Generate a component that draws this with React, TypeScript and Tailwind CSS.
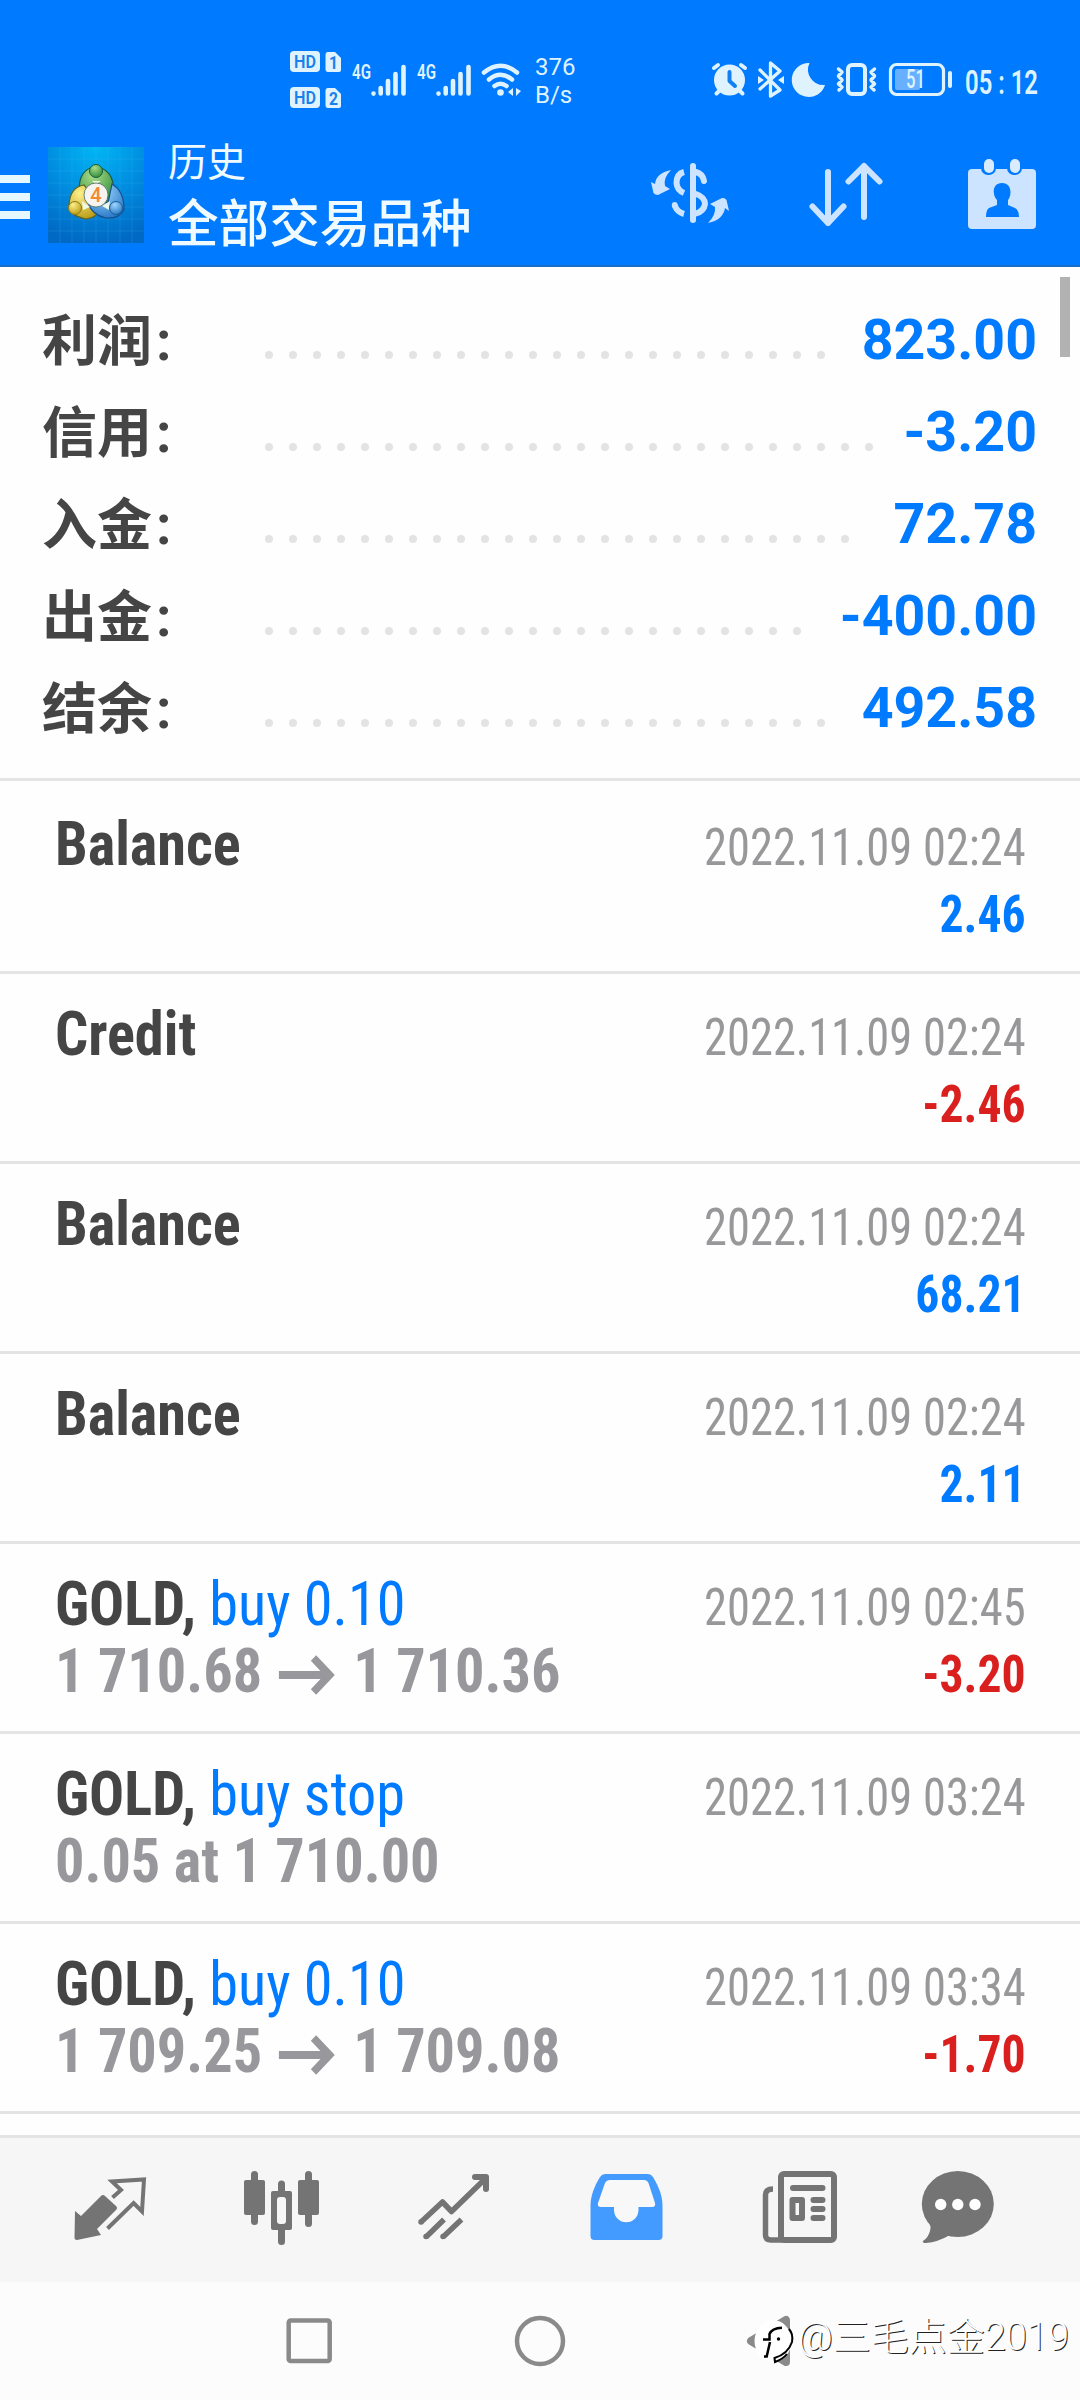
import React from "react";

const totals = [
    { label: "利润", value: "823.00", dots: 24 },
    { label: "信用", value: "-3.20", dots: 26 },
    { label: "入金", value: "72.78", dots: 25 },
    { label: "出金", value: "-400.00", dots: 23 },
    { label: "结余", value: "492.58", dots: 24 },
];

type Deal = {
    title: string;
    action?: string;
    open?: string;
    close?: string;
    time: string;
    amount?: string;
};

const deals: Deal[] = [
    { title: "Balance", time: "2022.11.09 02:24", amount: "2.46" },
    { title: "Credit", time: "2022.11.09 02:24", amount: "-2.46" },
    { title: "Balance", time: "2022.11.09 02:24", amount: "68.21" },
    { title: "Balance", time: "2022.11.09 02:24", amount: "2.11" },
    { title: "GOLD,", action: "buy 0.10", open: "1 710.68", close: "1 710.36", time: "2022.11.09 02:45", amount: "-3.20" },
    { title: "GOLD,", action: "buy stop", open: "0.05 at 1 710.00", time: "2022.11.09 03:24" },
    { title: "GOLD,", action: "buy 0.10", open: "1 709.25", close: "1 709.08", time: "2022.11.09 03:34", amount: "-1.70" },
];

function HdBadge({ sim }: { sim: string }) {
    return (
        <svg className="w-[52px] h-[22px] overflow-visible" viewBox="0 0 52 22">
            <rect x="0" y="0" width="30" height="21" rx="4" fill="#dff3ff" />
            <text x="4" y="17" fontSize="19" fontWeight="600" textLength="22" lengthAdjust="spacingAndGlyphs" fill="#1a80ea">HD</text>
            <path d="M38 1H45L51 7V19Q51 21 48 21H38Q35.500 21 35.500 18V4Q35.500 1 38 1Z" fill="#dff3ff" />
            <text x="39" y="17.500" fontSize="18" fontWeight="700" textLength="9" lengthAdjust="spacingAndGlyphs" fill="#1a80ea">{sim}</text>
        </svg>
    );
}

function Signal() {
    return (
        <svg className="w-[55px] h-[36px] overflow-visible" viewBox="0 0 55 36">
            <text x="0" y="16.500" fontSize="20" fontWeight="600" textLength="19" lengthAdjust="spacingAndGlyphs" fill="#dff3ff">4G</text>
            <g stroke="#dff3ff" strokeWidth="4.600" strokeLinecap="round">
                <path d="M21.500 31.500V31.600M28.700 26V31.500M36 19V31.500M43.500 12V31.500M51.500 5V31.500" />
            </g>
        </svg>
    );
}

function StatusBar() {
    return (
        <div className="h-[140px] flex items-start text-[#dff3ff]">
            <div className="ml-[290px] mt-[51px] flex flex-col gap-[14px]">
                <HdBadge sim="1" />
                <HdBadge sim="2" />
            </div>
            <div className="ml-[10px] mt-[62px] flex gap-[10px]">
                <Signal />
                <Signal />
            </div>
            <svg className="ml-[8px] mt-[60px] w-[44px] h-[40px]" viewBox="0 0 44 40" fill="none" stroke="#dff3ff" strokeWidth="4.500" strokeLinecap="round">
                <path d="M4 12.500Q20.500 -1 37 12.500M9 19.500Q20.500 10 32 19.500M14.500 26Q20.500 21.500 26.500 26" />
                <circle cx="20.500" cy="32.500" r="3.300" fill="#dff3ff" stroke="none" />
                <path d="M33 28L28 32L33 36ZM36 28L41 31L36 36Z" fill="#dff3ff" stroke="none" />
            </svg>
            <div className="ml-[11px] mt-[53px] w-[60px] text-[24px] leading-[28px]">
                <div>376</div>
                <div>B/s</div>
            </div>
            <div className="ml-[115px] mt-[60px] flex items-start">
                <svg className="w-[242px] h-[40px] overflow-visible" viewBox="710 60 242 40" fill="none" stroke="#dff3ff" strokeLinecap="round" strokeLinejoin="round">
                    <circle cx="729.500" cy="80" r="15.500" fill="#dff3ff" stroke="none" />
                    <path d="M714 68L718 65M745 68L741 65M719 91L716.500 93.500M740 91L742.500 93.500" strokeWidth="4" />
                    <path d="M729.500 72V81L735 86" stroke="#1380f2" strokeWidth="4" />
                    <path d="M760 70L780 90L770.500 96V63L780 71L760 89" strokeWidth="3.300" />
                    <path d="M758 76L764 80L758 84ZM784 76L778 80L784 84Z" fill="#dff3ff" stroke="none" />
                    <path d="M809.500 63A17 17 0 1 0 825 85A15.500 15.500 0 0 1 809.500 63Z" fill="#dff3ff" stroke="none" />
                    <rect x="848" y="65" width="17" height="29" rx="4" strokeWidth="4" />
                    <path d="M838.500 69L842 72L838.500 76L842 80L838.500 84L842 87L839 90M874.500 69L871 72L874.500 76L871 80L874.500 84L871 87L874 90" strokeWidth="3.500" />
                    <rect x="890.500" y="64.500" width="53" height="30" rx="6" strokeWidth="3.200" />
                    <rect x="895" y="69" width="25" height="21" rx="2" fill="#66b0ff" stroke="none" />
                    <text x="906" y="88" fontSize="25" fontWeight="500" textLength="19" lengthAdjust="spacingAndGlyphs" fill="#dff3ff" stroke="none">51</text>
                    <path d="M950 73V86" strokeWidth="4" />
                </svg>
                <svg className="ml-[12px] w-[76px] h-[40px] overflow-visible" viewBox="964 60 76 40" fill="#dff3ff" fontSize="33" fontWeight="600">
                    <text x="965" y="94" textLength="73" lengthAdjust="spacingAndGlyphs">05 : 12</text>
                </svg>
            </div>
        </div>
    );
}

function Logo() {
    return (
        <svg className="w-24 h-24" viewBox="0 0 96 96">
            <defs>
                <radialGradient id="sky" cx="50%" cy="0%" r="100%">
                    <stop offset="0" stopColor="#00b7f5" />
                    <stop offset="0.500" stopColor="#008ee0" />
                    <stop offset="1" stopColor="#0069c4" />
                </radialGradient>
                <radialGradient id="green" cx="40%" cy="25%" r="80%">
                    <stop offset="0" stopColor="#a9dc8a" />
                    <stop offset="1" stopColor="#2e8b3a" />
                </radialGradient>
                <radialGradient id="yellow" cx="35%" cy="25%" r="85%">
                    <stop offset="0" stopColor="#fff08a" />
                    <stop offset="1" stopColor="#b5950f" />
                </radialGradient>
                <radialGradient id="blue" cx="40%" cy="25%" r="85%">
                    <stop offset="0" stopColor="#9ed7ff" />
                    <stop offset="1" stopColor="#1c6fc0" />
                </radialGradient>
            </defs>
            <rect width="96" height="96" fill="url(#sky)" />
            <path d="M12 0V96M24 0V96M36 0V96M48 0V96M60 0V96M72 0V96M84 0V96M0 12H96M0 24H96M0 36H96M0 48H96M0 60H96M0 72H96M0 84H96" stroke="#4cc3f5" strokeOpacity="0.180" />
            <path d="M31 44Q31 21 48 20Q66 22 66 46L62 56L36 50Z" fill="url(#green)" stroke="#1c5a3c" strokeWidth="1.200" />
            <path d="M36 38Q22 40 21 58Q20 68 38 72Q50 71 52 60Z" fill="url(#yellow)" stroke="#5e6420" strokeWidth="1.200" />
            <path d="M64 37Q76 44 76 62Q72 72 58 71Q44 68 40 56L60 56Z" fill="url(#blue)" stroke="#174f8c" strokeWidth="1.200" />
            <path d="M34 54L35 63L42 60M54 59L61 63L62 54M44 34L48 37L53 34" fill="#eef8e8" />
            <circle cx="48" cy="24" r="6.500" fill="url(#green)" stroke="#1c5a3c" />
            <circle cx="27" cy="61" r="6.500" fill="url(#yellow)" stroke="#8a7a14" />
            <circle cx="68" cy="61" r="6.500" fill="url(#blue)" stroke="#1c5c9c" />
            <circle cx="48" cy="48" r="12" fill="#f6f3f1" stroke="#4a6a5a" strokeWidth="0.800" />
            <text x="48" y="55" fontSize="20" fontWeight="500" textAnchor="middle" fill="#f28a30">4</text>
        </svg>
    );
}

function Header() {
    return (
        <header className="h-[267px] bg-[#007aff] border-b-2 border-[#1a6fc4]">
            <StatusBar />
            <div className="flex items-start">
                <div className="mt-[35px] w-[30px] flex flex-col gap-[10px]">
                    <div className="h-2 bg-[#e6f8ff]"></div>
                    <div className="h-2 bg-[#e6f8ff]"></div>
                    <div className="h-2 bg-[#e6f8ff]"></div>
                </div>
                <div className="ml-[18px] mt-[7px]">
                    <Logo />
                </div>
                <div className="ml-6 w-[480px] text-[#f0fbff]">
                    <div className="text-[39px] leading-[46px]">历史</div>
                    <div className="text-[50.6px] leading-[60px] mt-[9px] font-medium">全部交易品种</div>
                </div>
                <svg className="w-[432px] h-[100px]" viewBox="648 140 432 100" fill="none" stroke="#cce4ff" strokeLinecap="round" strokeLinejoin="round">
                    <path d="M693 166V220" strokeWidth="6" />
                    <path d="M684 172Q676.500 174 676.500 183Q677 190 684 193" strokeWidth="6" strokeLinecap="butt" />
                    <path d="M674.500 205Q677 212 684 214" strokeWidth="6" strokeLinecap="butt" />
                    <circle cx="674.700" cy="205" r="2.900" fill="#cce4ff" stroke="none" />
                    <path d="M696 172Q703 174 704 181M696 194Q705 197 705 204Q704 211 696 213.500" strokeWidth="6" />
                    <path d="M671 170Q656 173 655 184L651 182L653.500 193Q655 195 658 195L670 189L665 186Q663 178 671 170Z" fill="#cce4ff" stroke="none" />
                    <path d="M708 223Q723 220 725 208L729 211L726.500 200Q725 197.500 722 198L710 204L715 207Q716 215 708 223Z" fill="#cce4ff" stroke="none" />
                    <path d="M828 172V223M812.500 206.500L828 223L843.500 206.500M864 217V166M848.500 181.500L864 166L879.500 181.500" strokeWidth="6" />
                    <rect x="968" y="169" width="68" height="60" rx="4" fill="#cce4ff" stroke="none" />
                    <rect x="981" y="156" width="15" height="19" rx="7" fill="#007aff" stroke="none" />
                    <rect x="1007" y="156" width="15" height="19" rx="7" fill="#007aff" stroke="none" />
                    <rect x="984" y="159" width="10" height="14" rx="5" fill="#d9ecff" stroke="none" />
                    <rect x="1010" y="159" width="10" height="14" rx="5" fill="#d9ecff" stroke="none" />
                    <path d="M1002 183C1012 183 1012 195 1008 200V205L1015 208Q1019 210 1019 217H986Q986 210 989 208L997 205V200C992 195 992 183 1002 183Z" fill="#007aff" stroke="none" />
                </svg>
            </div>
        </header>
    );
}

function Totals() {
    return (
        <div className="h-[514px] pt-[27px] pl-[42px] pr-[43px] border-b-[3px] border-[#e4e4e4]">
            {totals.map((row) => (
                <div key={row.label} className="h-[92px] flex items-center font-bold text-[55.5px]">
                    <div className="w-[223px] pt-[3px] text-[55px] text-[#454545]">
                        {row.label}
                        <span className="ml-[4px]">:</span>
                    </div>
                    <div className="flex gap-4 pt-[30px]">
                        {Array.from({ length: row.dots }, (_, i) => (
                            <div key={i} className="w-2 h-2 rounded-full bg-[#e3e3e3]"></div>
                        ))}
                    </div>
                    <div className="ml-auto pt-[2px] text-[#007aff]">{row.value}</div>
                </div>
            ))}
        </div>
    );
}

function DealRow({ deal }: { deal: Deal }) {
    const loss = deal.amount?.startsWith("-");
    return (
        <div className="h-[190px] border-b-[3px] border-[#e4e4e4] pl-[55px] pr-[54px] pt-[26px] flex justify-between [font-stretch:75%]">
            <div className="origin-left scale-x-[0.94] text-[62px] leading-[67px] font-bold text-[#454545] whitespace-nowrap">
                <div>
                    {deal.title}
                    {deal.action && <span className="font-[450] text-[#007aff]"> {deal.action}</span>}
                </div>
                {deal.open && (
                    <div className="flex items-center text-[#98989c]">
                        {deal.open}
                        {deal.close && (
                            <>
                                <svg className="w-[61px] h-[40px] ml-[18px] mr-[18px] mt-[8px]" viewBox="0 0 61 40" fill="none" stroke="#98989c" strokeWidth="8">
                                    <path d="M0 20H55M37 3L54 20L37 37" />
                                </svg>
                                {deal.close}
                            </>
                        )}
                    </div>
                )}
            </div>
            <div className="text-right text-[51px] leading-[67px] pt-[4px] whitespace-nowrap">
                <div className="origin-right scale-x-[0.912] font-[440] text-[#98989a]">{deal.time}</div>
                {deal.amount && (
                    <div className={loss ? "origin-right scale-x-[0.935] font-bold text-[#da1f1f]" : "origin-right scale-x-[0.935] font-bold text-[#007aff]"}>
                        {deal.amount}
                    </div>
                )}
            </div>
        </div>
    );
}

function TabBar() {
    return (
        <div className="h-[147px] pl-[23px] bg-[#f6f6f6] border-t-[3px] border-[#e4e4e4] flex">
            <svg className="w-[172px] h-[144px]" viewBox="23 2138 172 144">
                <path d="M75 2211L81 2216L101 2196Q103 2194 105 2196L116 2206Q118 2208 116 2210L97 2229L101 2235L77 2240Q74.500 2240 74.500 2238Z" fill="#747474" />
                <path d="M112.500 2197.500L121 2190L112 2181.500L144 2179.500L142 2211.500L133.600 2203L107.500 2228.500" fill="none" stroke="#747474" strokeWidth="4" />
            </svg>
            <svg className="w-[172px] h-[144px]" viewBox="195 2138 172 144" fill="#747474">
                <rect x="244" y="2180" width="21" height="35" rx="2" />
                <rect x="251" y="2171" width="7" height="54" rx="3.500" />
                <rect x="278" y="2180.500" width="7" height="64.500" rx="3.500" />
                <rect x="271" y="2191" width="21" height="39" rx="2" />
                <rect x="277" y="2197" width="9" height="27" rx="3" fill="#f6f6f6" />
                <rect x="298" y="2180" width="21" height="35" rx="2" />
                <rect x="305" y="2171" width="7" height="56" rx="3.500" />
            </svg>
            <svg className="w-[172px] h-[144px]" viewBox="367 2138 172 144" fill="none" stroke="#747474" strokeWidth="5.500">
                <path d="M420.500 2222.500L442.500 2202L451.500 2211.500L485 2179" strokeLinejoin="round" />
                <path d="M475 2177H486V2189" strokeWidth="6" strokeLinecap="round" strokeLinejoin="round" />
                <path d="M426 2237L444 2219.500M443 2237L461.500 2219.500" />
                <path d="M421 2222V2222.100M426 2236.500V2236.600M443 2236.500V2236.600" strokeLinecap="round" />
            </svg>
            <svg className="w-[172px] h-[144px]" viewBox="539 2138 172 144">
                <path d="M605 2174H648Q651 2174 653 2177C659 2187 662.500 2196 662.500 2206V2236Q662.500 2240 658.500 2240H594.500Q590.500 2240 590.500 2236V2206C590.500 2196 594 2187 600 2177Q602 2174 605 2174Z" fill="#439aff" />
                <path d="M610 2180H644Q647 2180 648.500 2183L655 2203Q656 2207 652 2207H638.500V2210A12.200 12.200 0 0 1 614 2210V2207H601Q597 2207 598 2203L605 2183Q606.500 2180 610 2180Z" fill="#f8f8f8" />
            </svg>
            <svg className="w-[172px] h-[144px]" viewBox="711 2138 172 144" fill="none" stroke="#747474" strokeWidth="6">
                <rect x="781" y="2174" width="53" height="66" rx="3" />
                <path d="M773 2189Q765.500 2189 765.500 2195V2235Q765.500 2240 771 2240H783" strokeWidth="5.500" />
                <path d="M793 2188H822.500M813.500 2200H822.500M813.500 2209H822.500M813.500 2218H822.500" strokeLinecap="round" />
                <rect x="792.500" y="2200" width="9.500" height="18" strokeLinejoin="round" />
            </svg>
            <svg className="w-[172px] h-[144px]" viewBox="883 2138 172 144">
                <ellipse cx="957.800" cy="2204" rx="36" ry="33" fill="#747474" />
                <path d="M927 2220Q932 2226 930 2231Q928 2238 923 2241Q922 2243 926 2243Q938 2242 950 2235L940 2215Z" fill="#747474" />
                <g fill="#ffffff">
                    <circle cx="940.700" cy="2204.500" r="5.700" />
                    <circle cx="957.800" cy="2204.500" r="5.700" />
                    <circle cx="975" cy="2204.500" r="5.700" />
                </g>
            </svg>
        </div>
    );
}

function SystemNav() {
    return (
        <div className="h-[118px] bg-[#fcfcfc] flex items-start">
            <svg className="w-[798px] h-[118px]" viewBox="0 2282 798 118" fill="none" stroke="#8a8a8a" strokeWidth="4.500">
                <rect x="288.700" y="2320.500" width="41" height="40.500" rx="2" />
                <circle cx="540" cy="2341" r="23" />
                <path d="M751 2341L786 2320V2362Z" fill="#8a8a8a" strokeWidth="8" strokeLinejoin="round" />
                <ellipse cx="773" cy="2341" rx="18.500" ry="21" fill="#ffffff" stroke="none" />
                <path d="M763 2339.500H769.500V2334Q772 2328 782 2327.700M770 2342L766.700 2356.500H764" stroke="#000000" strokeWidth="2.500" />
                <path d="M789 2329Q793.500 2334 792 2342Q788 2354 774.500 2358L775 2362Q783 2359 787 2354" stroke="#000000" strokeWidth="2" />
                <circle cx="778.500" cy="2339" r="1.700" fill="#000000" stroke="none" />
            </svg>
            <div className="mt-[34px] text-[38px] leading-[42px] font-light text-white whitespace-nowrap [text-shadow:1px_1px_0_#222]">@三毛点金2019</div>
        </div>
    );
}

export default function App() {
    return (
        <div className="relative w-[1080px] h-[2400px] flex flex-col overflow-hidden bg-[#fefefe] font-[Roboto,'Noto_Sans_CJK_SC',sans-serif]">
            <Header />
            <Totals />
            <div className="h-[1354px] pt-[3px] overflow-hidden">
                {deals.map((deal, i) => (
                    <DealRow key={i} deal={deal} />
                ))}
            </div>
            <TabBar />
            <SystemNav />
            <div className="absolute top-[277px] right-[10px] w-[10px] h-[80px] bg-[#b2b2b2]"></div>
        </div>
    );
}
